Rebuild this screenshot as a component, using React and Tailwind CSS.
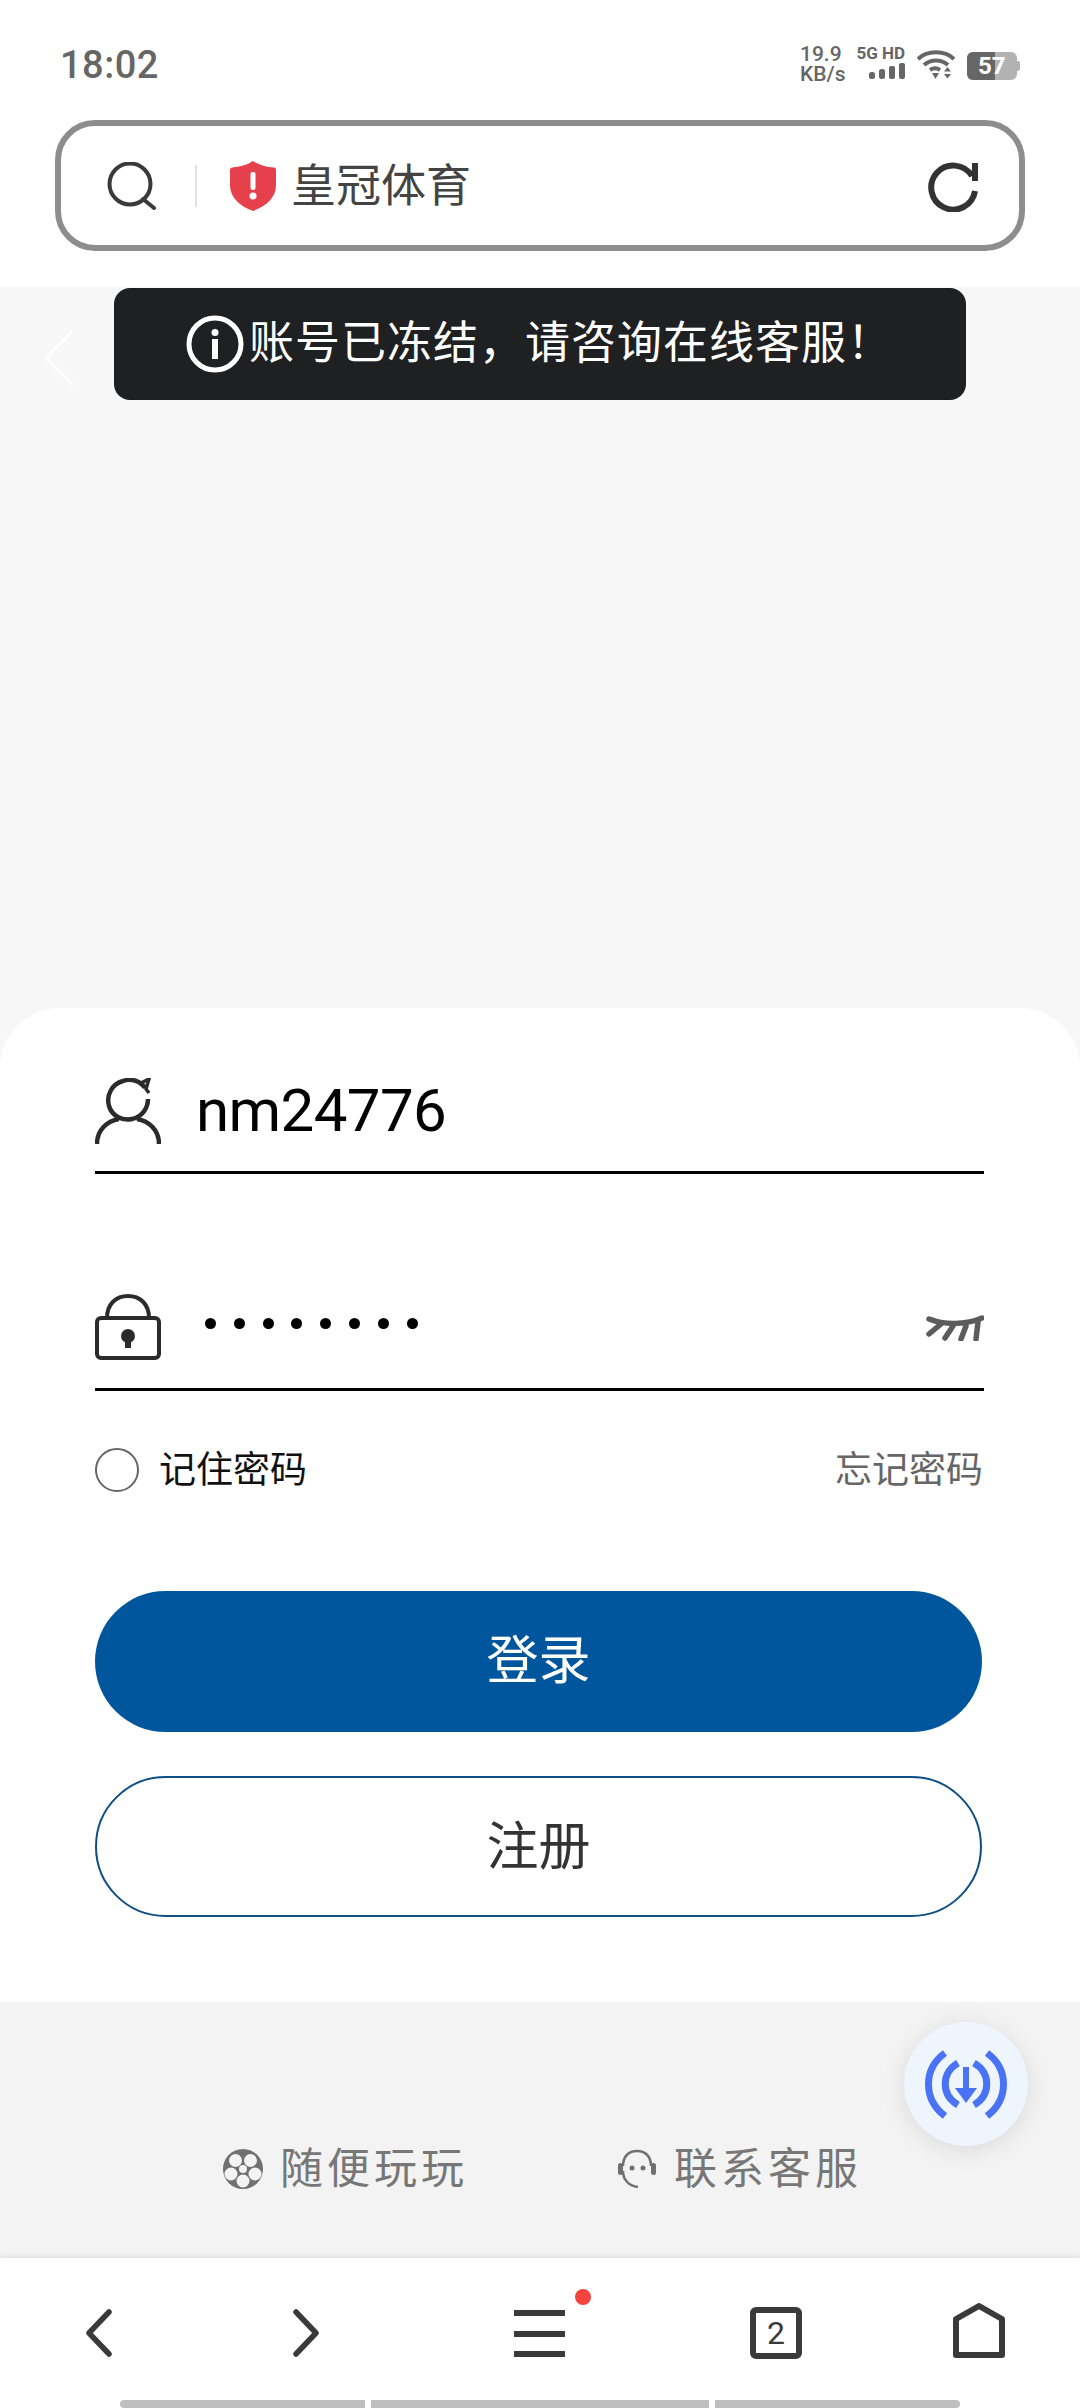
import React from "react";

const StatusBar = () => (
  <div className="flex h-[120px] items-start pl-[60px] pr-[60px] text-[#666]">
    <span className="mt-[43px] text-[38px] font-medium leading-[44px] tracking-[0.5px]">18:02</span>
    <div className="ml-auto mt-[44px] flex items-start">
      <div className="flex w-[44px] flex-col text-[21px] font-medium leading-[20px]">
        <span>19.9</span>
        <span>KB/s</span>
      </div>
      <div className="ml-[13px] flex w-[48px] flex-col items-end">
        <span className="whitespace-nowrap text-[17px] font-bold leading-[18px]">5G HD</span>
        <svg width="36" height="18" viewBox="0 0 36 18" fill="#666">
          <rect x="0" y="10" width="6" height="7" rx="2.500" />
          <rect x="10" y="7" width="6" height="10" rx="2.500" />
          <rect x="20" y="4" width="6" height="13" rx="2" />
          <rect x="30" y="1" width="6" height="16" rx="2" />
        </svg>
      </div>
      <svg className="ml-[12px] mt-[6px]" width="38" height="30" viewBox="0 0 38 30" fill="none" stroke="#666" strokeWidth="4">
        <path d="M1 9C10 0 28 0 37 9" />
        <path d="M7 15C14 9 24 9 31 15" />
        <path d="M13 20C16 18 20 18 23 20" />
        <path d="M15 23L18.500 29L22 23Z" fill="#666" stroke="none" />
        <path d="M27 21.500L30.500 17L34 21.500ZM27 24L30.500 28.500L34 24Z" fill="#666" stroke="none" />
      </svg>
      <div className="ml-[12px] mt-[8px] flex h-[28px] w-[50px] overflow-hidden rounded-[6px] bg-[#b2b2b2]">
        <div className="relative h-full w-[28px] bg-[#666]">
          <span className="absolute left-[11px] top-0 text-[24px] font-bold leading-[28px] text-white">57</span>
        </div>
      </div>
      <div className="mt-[17px] h-[10px] w-[3px] rounded-r-[2px] bg-[#b2b2b2]" />
    </div>
  </div>
);

const AddressBar = () => (
  <div className="mx-[55px] flex h-[131px] items-center rounded-[40px] border-[6px] border-[#8d8d8d] bg-white pl-[46px] pr-[41px]">
    <svg width="50" height="48" viewBox="0 0 50 48" fill="none" stroke="#3a3a3a" strokeWidth="4">
      <circle cx="23" cy="22" r="20.500" />
      <path d="M36 37L47 46" strokeLinecap="round" />
    </svg>
    <div className="ml-[38px] h-[42px] w-[2px] bg-[#e4e4e4]" />
    <svg className="ml-[33px]" width="46" height="50" viewBox="0 0 46 50">
      <path d="M23 0C29 4 36 6 44 6.500C45 6.500 46 7.500 46 9V24C46 37 36 45 23 50C10 45 0 37 0 24V9C0 7.500 1 6.500 2 6.500C10 6 17 4 23 0Z" fill="#e5404b" />
      <rect x="20.500" y="11" width="5" height="18" rx="2" fill="#fff" />
      <circle cx="23" cy="35" r="3.500" fill="#fff" />
    </svg>
    <span className="ml-[15px] mt-[3px] text-[45px] font-normal leading-[50px] text-[#444]">皇冠体育</span>
    {/* reload: open ring with a short bar closing it at the top right */}
    <svg className="ml-auto mt-[3px]" width="50" height="50" viewBox="0 0 50 50" fill="none" stroke="#333" strokeWidth="6">
      <path d="M47 29A22 22 0 1 1 44 14" />
      <rect x="44" y="1" width="6" height="18" fill="#333" stroke="none" />
    </svg>
  </div>
);

// Top toast and the pale back arrow sit above the empty page area
const PageArea = () => (
  <div className="relative h-[781px] bg-[#f7f7f7]">
    <svg className="absolute left-[43px] top-[42px]" width="32" height="58" viewBox="0 0 32 58" fill="none" stroke="#fff" strokeWidth="3">
      <path d="M30 2L3 29L30 56" />
    </svg>
    <div className="absolute left-[114px] top-[1px] flex h-[112px] w-[852px] items-center rounded-[16px] bg-[#1f2022] pl-[72px] text-white">
      <svg width="58" height="58" viewBox="0 0 58 58" fill="none">
        <circle cx="29" cy="29" r="26" stroke="#fff" strokeWidth="5" />
        <circle cx="29" cy="17.500" r="3.500" fill="#fff" />
        <rect x="26" y="24" width="6" height="20" fill="#fff" />
      </svg>
      <span className="ml-[5px] whitespace-nowrap text-[45px] leading-[50px] tracking-[1px]">账号已冻结，请咨询在线客服！</span>
    </div>
  </div>
);

const UserIcon = () => (
  <svg width="66" height="66" viewBox="0 0 66 66" fill="none" stroke="#2b2b2b" strokeWidth="4.500">
    <path d="M50 10C46 3 36 0 28 3C17 6 11 17 14 28C17 38 27 43 37 41C47 39 53 30 53 21" />
    <path d="M44 6L54 1L51 11L54 15" strokeWidth="3.500" />
    <path d="M2 66C2 52 12 43 24 41M64 66C64 52 54 43 42 41" />
  </svg>
);

const LockIcon = () => (
  <svg width="66" height="66" viewBox="0 0 66 66" fill="none">
    <path d="M12 24C12 10 21 2 33 2C45 2 54 10 54 24" stroke="#2b2b2b" strokeWidth="4" />
    <rect x="2" y="24" width="62" height="40" rx="4" stroke="#2b2b2b" strokeWidth="4" />
    <circle cx="33" cy="42" r="7" fill="#2b2b2b" />
    <rect x="30" y="44" width="6" height="10" fill="#2b2b2b" />
  </svg>
);

const ClosedEye = () => (
  <svg width="58" height="26" viewBox="0 0 58 26" fill="none" stroke="#5c5c5c" strokeWidth="5.500" strokeLinecap="round">
    <path d="M3 4C18 10 40 10 56 3" />
    <path d="M15 9L3 19M27 11L19 23M40 11L35 24M52 7L50 24" />
  </svg>
);

const LoginCard = () => (
  <div className="relative -mt-[60px] h-[994px] rounded-t-[60px] bg-white pl-[95px] pr-[96px] pt-[56px]">
    <div className="flex h-[110px] items-center border-b-[3px] border-black pb-[14px]">
      <UserIcon />
      <span className="ml-[35px] text-[60px] leading-[66px] tracking-[-0.6px] text-black">nm24776</span>
    </div>
    <div className="mt-[107px] flex h-[110px] items-center border-b-[3px] border-black pb-[16px]">
      <LockIcon />
      <div className="ml-[44px] -mt-[6px] flex gap-[17.800px]">
        {[1, 2, 3, 4, 5, 6, 7, 8].map((dot) => (
          <span key={dot} className="h-[11px] w-[11px] rounded-full bg-black" />
        ))}
      </div>
      <div className="ml-auto mt-[2px]">
        <ClosedEye />
      </div>
    </div>
    <div className="mt-[57px] flex h-[44px] items-center">
      <span className="h-[44px] w-[44px] rounded-full border-2 border-[#666]" />
      <span className="ml-[20px] mt-[2px] text-[37px] leading-[44px] text-[#111]">记住密码</span>
      <span className="ml-auto mr-[1px] mt-[2px] text-[37px] leading-[44px] text-[#666]">忘记密码</span>
    </div>
    <button className="mt-[99px] flex h-[141px] w-[887px] items-center justify-center rounded-full bg-[#00569d] text-[52px] text-white">
      登录
    </button>
    <button className="mt-[44px] flex h-[141px] w-[887px] items-center justify-center rounded-full border-2 border-[#0f4f85] bg-white pt-[3px] text-[52px] text-[#333]">
      注册
    </button>
  </div>
);

const BallIcon = () => (
  <svg width="40" height="40" viewBox="0 0 40 40" fill="#707070">
    <path
      fillRule="evenodd"
      d="M20 0a20 20 0 1 0 0 40a20 20 0 1 0 0-40ZM20 16a4 4 0 1 1 0 8a4 4 0 1 1 0-8ZM12.500 5a6.500 6.500 0 1 1 0 13a6.500 6.500 0 1 1 0-13ZM27.500 5a6.500 6.500 0 1 1 0 13a6.500 6.500 0 1 1 0-13ZM8 18.500a6.500 6.500 0 1 1 0 13a6.500 6.500 0 1 1 0-13ZM32 18.500a6.500 6.500 0 1 1 0 13a6.500 6.500 0 1 1 0-13ZM20 25.500a6.500 6.500 0 1 1 0 13a6.500 6.500 0 1 1 0-13Z"
    />
  </svg>
);

const HeadsetIcon = () => (
  <svg width="40" height="40" viewBox="0 0 40 40" fill="none" stroke="#707070" strokeWidth="2.500">
    <path d="M6 17C6 7 12 2 20 2C28 2 34 7 34 17" />
    <path d="M6 22C6 31 12 37 21 38" />
    <rect x="1" y="14" width="5" height="12" rx="2.500" fill="#707070" stroke="none" />
    <rect x="34" y="14" width="5" height="12" rx="2.500" fill="#707070" stroke="none" />
    <circle cx="15" cy="19" r="2.500" fill="#707070" stroke="none" />
    <circle cx="26" cy="19" r="2.500" fill="#707070" stroke="none" />
  </svg>
);

const DownloadBubble = () => (
  <div className="absolute left-[904px] top-[20px] flex h-[124px] w-[124px] items-center justify-center rounded-full bg-[#eff5fd] shadow-[0_4px_24px_rgba(0,0,0,0.10)]">
    <svg width="124" height="124" viewBox="0 0 124 124" fill="none" stroke="#4a72f5" strokeWidth="7">
      <path d="M41 31C19 47 19 77 41 94" />
      <path d="M54 41C37 51 37 73 54 83" />
      <path d="M83 31C105 47 105 77 83 94" />
      <path d="M70 41C87 51 87 73 70 83" />
      <path d="M59 45H65V66H73L62 81L51 66H59Z" fill="#4a72f5" stroke="none" />
    </svg>
  </div>
);

const FooterLinks = () => (
  <div className="relative flex h-[256px] items-start bg-[#f3f3f3] pl-[223px] pt-[144px]">
    <DownloadBubble />
    <div className="flex items-center">
      <BallIcon />
      <span className="ml-[17px] text-[43px] leading-[46px] tracking-[4px] text-[#777]">随便玩玩</span>
    </div>
    <div className="ml-[149px] flex items-center">
      <HeadsetIcon />
      <span className="ml-[17px] text-[43px] leading-[46px] tracking-[4px] text-[#777]">联系客服</span>
    </div>
  </div>
);

const BottomNav = () => (
  <div className="relative h-[150px] bg-white shadow-[0_-2px_4px_rgba(0,0,0,0.07)]">
    <div className="flex h-[142px] items-start pl-[85px] pt-[43px]">
      <svg className="mt-[8px]" width="28" height="48" viewBox="0 0 28 48" fill="none" stroke="#3a3a3a" strokeWidth="5.500" strokeLinecap="round" strokeLinejoin="round">
        <path d="M24 3L4 24L24 45" />
      </svg>
      <svg className="ml-[179px] mt-[8px]" width="28" height="48" viewBox="0 0 28 48" fill="none" stroke="#3a3a3a" strokeWidth="5.500" strokeLinecap="round" strokeLinejoin="round">
        <path d="M4 3L24 24L4 45" />
      </svg>
      <div className="relative ml-[194px] mt-[9px] flex h-[47px] w-[51px] flex-col justify-between">
        <span className="h-[6px] bg-[#3a3a3a]" />
        <span className="h-[6px] bg-[#3a3a3a]" />
        <span className="h-[6px] bg-[#3a3a3a]" />
        <span className="absolute -top-[21px] left-[61px] h-[16px] w-[16px] rounded-full bg-[#f5433d]" />
      </div>
      <div className="ml-[185px] mt-[6px] flex h-[52px] w-[52px] items-center justify-center rounded-[6px] border-[6px] border-[#3a3a3a] text-[32px] leading-none text-[#3a3a3a]">
        2
      </div>
      <svg className="ml-[151px] mt-[2px]" width="52" height="55" viewBox="0 0 52 55" fill="none" stroke="#3a3a3a" strokeWidth="6" strokeLinejoin="round">
        <path d="M26 3L49 16V52H3V16Z" />
      </svg>
    </div>
    <div className="flex h-[8px] gap-[6px] pl-[120px]">
      <span className="w-[245px] rounded-l-full bg-[#bfbfbf]" />
      <span className="w-[338px] bg-[#bfbfbf]" />
      <span className="w-[245px] rounded-r-full bg-[#bfbfbf]" />
    </div>
  </div>
);

export default function App() {
  return (
    <div className="h-[2408px] w-[1080px] overflow-hidden bg-white [font-family:'Roboto','Noto_Sans_CJK_SC',sans-serif]">
      <div className="h-[287px]">
        <StatusBar />
        <AddressBar />
      </div>
      <PageArea />
      <LoginCard />
      <FooterLinks />
      <BottomNav />
    </div>
  );
}
